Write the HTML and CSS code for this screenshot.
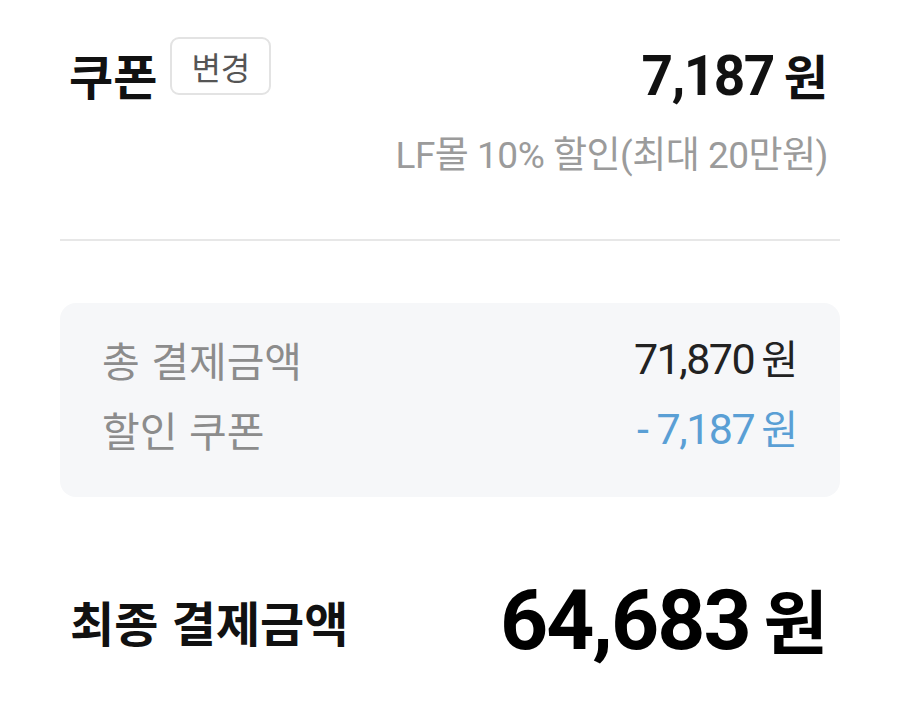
FILE: index.html
```html
<!DOCTYPE html>
<html lang="ko">
<head>
<meta charset="utf-8">
<title>쿠폰</title>
<link rel="stylesheet" href="styles.css">
</head>
<body>
<main class="page">
  <section class="coupon">
    <div class="coupon-row">
      <div class="coupon-left">
        <h2 class="coupon-title">쿠폰</h2>
        <button class="change-btn" type="button">변경</button>
      </div>
      <div class="coupon-amount"><span class="num">7,187</span> <span class="won">원</span></div>
    </div>
    <p class="coupon-desc">LF몰 10% 할인(최대 20만원)</p>
  </section>
  <hr class="divider">
  <section class="summary">
    <div class="summary-row">
      <span class="summary-label">총 결제금액</span>
      <span class="summary-value"><span class="num">71,870</span><span class="won">원</span></span>
    </div>
    <div class="summary-row">
      <span class="summary-label">할인 쿠폰</span>
      <span class="summary-value discount"><span class="num">- 7,187</span><span class="won">원</span></span>
    </div>
  </section>
  <section class="final">
    <span class="final-label">최종 결제금액</span>
    <span class="final-value"><span class="num">64,683</span><span class="won">원</span></span>
  </section>
</main>
</body>
</html>
```
FILE: styles.css
```css
* { box-sizing: border-box; }
html, body {
  margin: 0;
  padding: 0;
  background: #ffffff;
}
body {
  font-family: Roboto, "Noto Sans CJK KR", "Noto Sans", sans-serif;
  color: #111;
}
.page {
  width: 900px;
  height: 724px;
  padding: 37px 60px 0 60px;
}
.coupon {
  padding: 0 12px 0 9px;
}
.coupon-row {
  display: flex;
  justify-content: space-between;
  align-items: center;
  height: 58px;
}
.coupon-left {
  display: flex;
  align-items: center;
  gap: 13px;
}
.coupon-title {
  margin: 0;
  font-family: "Noto Sans CJK KR", sans-serif;
  font-size: 48px;
  font-weight: 700;
  line-height: 1;
  color: #111;
  position: relative;
  top: 8px;
}
.change-btn {
  width: 101px;
  height: 58px;
  border: 2px solid #e3e3e3;
  border-radius: 9px;
  background: #fff;
  font-family: "Noto Sans CJK KR", sans-serif;
  font-size: 32px;
  color: #555;
  padding: 0;
  line-height: 1;
}
.coupon-amount {
  font-weight: 700;
  color: #111;
  line-height: 1;
  position: relative;
  top: 10px;
}
.coupon-amount .num {
  font-family: Roboto, sans-serif;
  font-size: 55px;
  letter-spacing: -1.5px;
}
.coupon-amount .won {
  font-family: "Noto Sans CJK KR", sans-serif;
  font-size: 48px;
  margin-left: 6px;
}
.coupon-desc {
  margin: 42px 0 0 0;
  text-align: right;
  font-size: 37px;
  line-height: 1;
  color: #9b9b9b;
  letter-spacing: -0.5px;
}
.divider {
  border: 0;
  border-top: 2px solid #e7e7e7;
  margin: 65px 0 0 0;
}
.summary {
  margin-top: 62px;
  background: #f6f7f9;
  border-radius: 16px;
  padding: 30px 42px 36px 42px;
  display: flex;
  flex-direction: column;
  gap: 18px;
  height: 194px;
}
.summary-row {
  display: flex;
  justify-content: space-between;
  align-items: center;
  height: 52px;
}
.summary-label {
  font-family: "Noto Sans CJK KR", sans-serif;
  font-size: 41px;
  color: #8c8c8c;
  line-height: 1;
}
.summary-value {
  color: #222;
  line-height: 1;
  display: flex;
  align-items: baseline;
  gap: 7px;
}
.summary-value .num {
  font-family: Roboto, sans-serif;
  font-size: 43px;
  letter-spacing: -1.5px;
}
.summary-value .won {
  font-family: "Noto Sans CJK KR", sans-serif;
  font-size: 40px;
}
.summary-value.discount {
  color: #5a9fd5;
}
.final {
  margin-top: 82px;
  padding: 0 12px 0 10px;
  display: flex;
  justify-content: space-between;
  align-items: center;
}
.final-label {
  font-family: "Noto Sans CJK KR", sans-serif;
  font-size: 48px;
  font-weight: 700;
  color: #111;
  line-height: 1;
}
.final-value {
  font-weight: 700;
  color: #000;
  line-height: 1;
  display: flex;
  align-items: baseline;
  gap: 14px;
}
.final-value .num {
  font-family: Roboto, sans-serif;
  font-size: 84px;
  letter-spacing: -2px;
}
.final-value .won {
  font-family: "Noto Sans CJK KR", sans-serif;
  font-size: 70px;
}
```
